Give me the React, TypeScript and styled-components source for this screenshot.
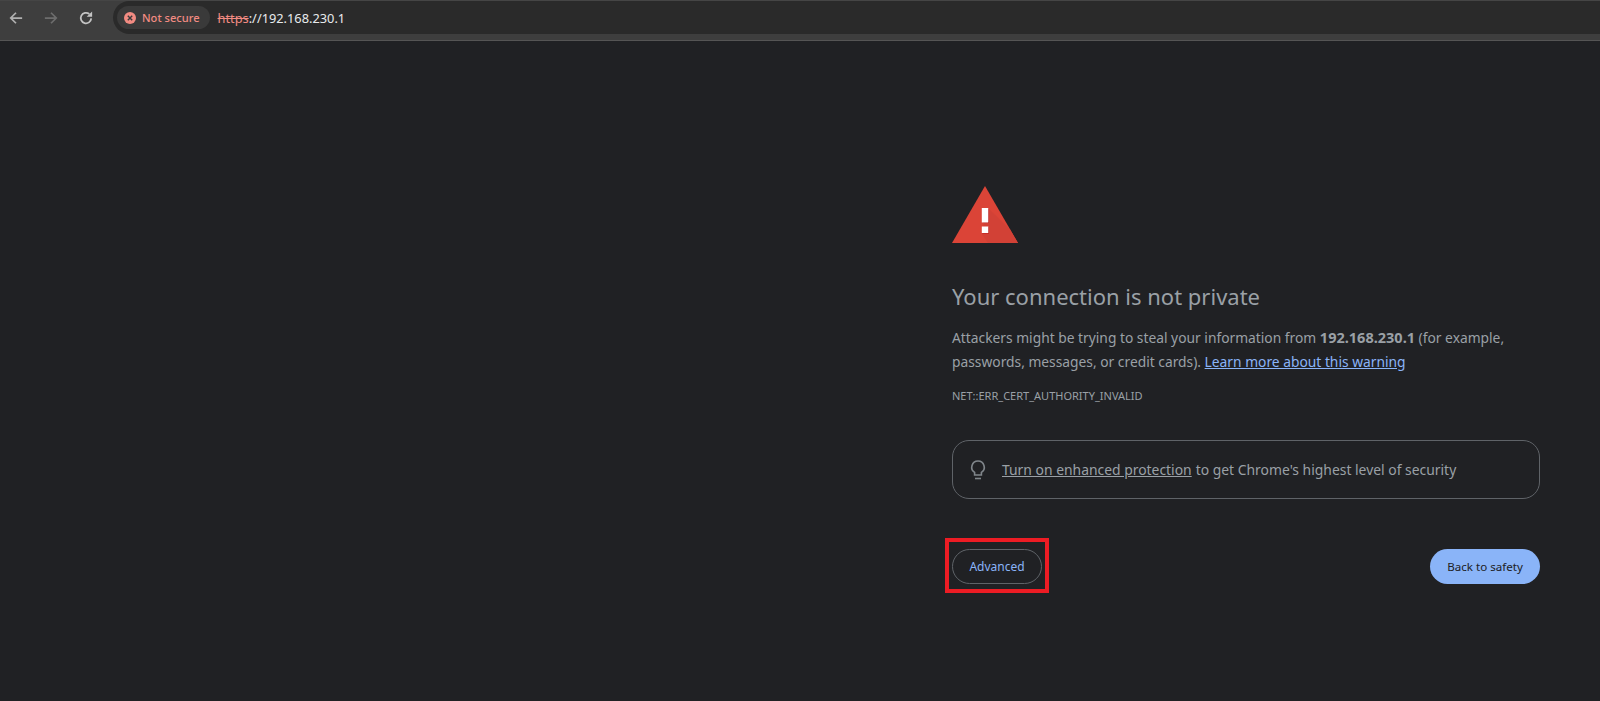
import React, { FC } from "react";
import styled, { createGlobalStyle } from "styled-components";

const GlobalStyle = createGlobalStyle`
  html, body {
    margin: 0;
    padding: 0;
    height: 100%;
    background: #202124;
    font-family: "Noto Sans", "Liberation Sans", sans-serif;
    overflow: hidden;
  }
`;

const Page = styled.div`
  display: flex;
  flex-direction: column;
  height: 701px;
`;

const Toolbar = styled.div`
  display: flex;
  align-items: flex-start;
  height: 41px;
  box-sizing: border-box;
  padding: 0 0 0 8px;
  background: #3e3e3e;
  border-top: 1px solid #454545;
  border-bottom: 1px solid #555;
`;

const NavButton = styled.div`
  display: flex;
  align-items: center;
  justify-content: center;
  width: 16px;
  height: 33px;
  margin-right: 19px;
`;

const Omnibox = styled.div`
  flex: 1;
  display: flex;
  align-items: center;
  height: 33px;
  padding-left: 4px;
  background: #2a2a2a;
  border-radius: 17px 0 0 17px;
`;

const SecurityChip = styled.div`
  display: flex;
  align-items: center;
  gap: 6px;
  height: 23px;
  padding: 0 10px 0 7px;
  border-radius: 12px;
  background: #3a3a3a;
  color: #f28b82;
  font-size: 11.1px;
  font-weight: 500;
`;

const Url = styled.div`
  margin-left: 8px;
  font-size: 12.8px;
  color: #e8eaed;
`;

const Scheme = styled.span`
  color: #f28b82;
  text-decoration: line-through;
`;

const Content = styled.main`
  flex: 1;
  box-sizing: border-box;
  padding: 145px 60px 0 952px;
`;

const WarningIcon = styled.svg`
  display: block;
  width: 66px;
  height: 57px;
`;

const Heading = styled.h1`
  margin: 39px 0 0;
  font-size: 22px;
  line-height: 28px;
  font-weight: 400;
  color: #9aa0a6;
`;

const Message = styled.p`
  margin: 15px 0 0;
  font-size: 13.8px;
  line-height: 24px;
  color: #9aa0a6;
`;

const Strong = styled.b`
  font-size: 14.5px;
  font-weight: 700;
`;

const Link = styled.a`
  color: #8ab4f8;
  text-decoration: underline;
`;

const ErrorCode = styled.div`
  margin-top: 14px;
  font-size: 11px;
  line-height: 16px;
  color: #9aa0a6;
`;

const Promo = styled.div`
  display: flex;
  align-items: center;
  box-sizing: border-box;
  height: 59px;
  margin-top: 36px;
  padding: 0 16px;
  border: 1px solid #5f6368;
  border-radius: 17px;
  color: #9aa0a6;
  font-size: 13.9px;
`;

const PromoLink = styled.span`
  margin-left: 15px;
  margin-right: 4px;
  text-decoration: underline;
`;

const Actions = styled.div`
  display: flex;
  justify-content: space-between;
  align-items: center;
  margin-top: 50px;
`;

const PillButton = styled.div<{ $primary?: boolean }>`
  position: relative;
  display: flex;
  align-items: center;
  justify-content: center;
  box-sizing: border-box;
  height: 35px;
  width: ${({ $primary }) => ($primary ? "110px" : "90px")};
  border-radius: 18px;
  font-size: ${({ $primary }) => ($primary ? "11.6px" : "12px")};
  color: ${({ $primary }) => ($primary ? "#202124" : "#8ab4f8")};
  background: ${({ $primary }) => ($primary ? "#8ab4f8" : "transparent")};
  border: ${({ $primary }) => ($primary ? "none" : "1px solid #5f6368")};
`;

const Highlight = styled.div`
  position: absolute;
  left: -8px;
  right: -8px;
  top: -12px;
  bottom: -10px;
  border: 4px solid #ed1c24;
  box-sizing: border-box;
`;

const App: FC = () => {
  return (
    <Page>
      <GlobalStyle />
      <Toolbar>
        <NavButton>
          <svg width="14" height="14" viewBox="0 0 16 16" fill="none" stroke="#b0b0b0" strokeWidth="2">
            <path d="M15 8H2M8 2L2 8l6 6" />
          </svg>
        </NavButton>
        <NavButton>
          <svg width="14" height="14" viewBox="0 0 16 16" fill="none" stroke="#6d6d6d" strokeWidth="2">
            <path d="M1 8h13M8 2l6 6-6 6" />
          </svg>
        </NavButton>
        <NavButton>
          <svg width="14" height="14" viewBox="0 0 16 16" fill="none" stroke="#c4c4c4" strokeWidth="2">
            <path d="M14 8.5A6 6 0 1 1 11.8 3.4" />
            <path d="M15 0.5v6.2H8.8z" fill="#c4c4c4" stroke="none" />
          </svg>
        </NavButton>
        <Omnibox>
          <SecurityChip>
            <svg width="12" height="12" viewBox="0 0 12 12">
              <circle cx="6" cy="6" r="6" fill="#f28b82" />
              <path d="M3.8 3.8l4.4 4.4M8.2 3.8L3.8 8.2" stroke="#3a3a3a" strokeWidth="1.4" />
            </svg>
            Not secure
          </SecurityChip>
          <Url>
            <Scheme>https</Scheme>://192.168.230.1
          </Url>
        </Omnibox>
      </Toolbar>
      <Content>
        <WarningIcon viewBox="0 0 66 57">
          <polygon points="33,0 66,57 0,57" fill="#db4437" />
          <polygon points="36,22 58,43.5 66,57 36,57 29.5,47" fill="#d24136" />
          <rect x="30.5" y="22.5" width="6.5" height="14.5" fill="#b71c1c" />
          <rect x="30.5" y="41" width="6.5" height="6.5" fill="#b71c1c" />
          <rect x="29.8" y="22" width="6.5" height="14.5" fill="#fff" />
          <rect x="29.8" y="40.5" width="6.5" height="6.5" fill="#fff" />
        </WarningIcon>
        <Heading>Your connection is not private</Heading>
        <Message>
          Attackers might be trying to steal your information from <Strong>192.168.230.1</Strong> (for example,
          <br />
          passwords, messages, or credit cards). <Link>Learn more about this warning</Link>
        </Message>
        <ErrorCode>NET::ERR_CERT_AUTHORITY_INVALID</ErrorCode>
        <Promo>
          <svg width="18" height="22" viewBox="0 0 18 22" fill="none" stroke="#80868b" strokeWidth="1.6">
            <path d="M9 2a6.2 6.2 0 0 0-3.4 11.4V16h6.8v-2.6A6.2 6.2 0 0 0 9 2z" />
            <path d="M6 19.5h6" />
          </svg>
          <PromoLink>Turn on enhanced protection</PromoLink> to get Chrome's highest level of security
        </Promo>
        <Actions>
          <PillButton>
            Advanced
            <Highlight />
          </PillButton>
          <PillButton $primary>Back to safety</PillButton>
        </Actions>
      </Content>
    </Page>
  );
};

export default App;
